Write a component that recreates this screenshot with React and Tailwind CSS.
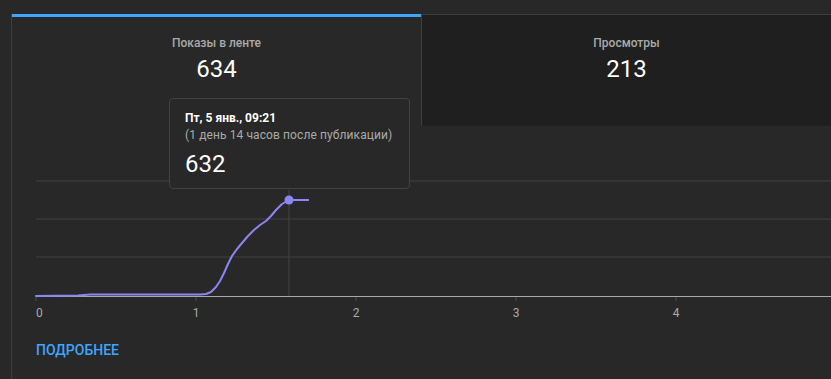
const curve = [
  [24, 170], [66, 169.5], [78, 168.5], [188, 168.5], [194, 168], [199, 166],
  [204, 161], [208, 155], [212, 147], [216, 138], [220, 130], [225, 123],
  [230, 117], [236, 110], [242, 104], [248, 99], [254, 95], [259, 90],
  [264, 84], [270, 78], [277, 74],
];

const ticks = [24, 184, 344, 504, 664];

const Chart = () => {
  const d = curve.map(([x, y], i) => `${i ? "L" : "M"}${x} ${y}`).join(" ");
  return (
    <svg width="819" height="200" className="block">
      {[55, 93, 131].map((y) => (
        <line key={y} x1="24" x2="819" y1={y} y2={y} stroke="#393939" strokeWidth="1.5" />
      ))}
      <line x1="277" x2="277" y1="64" y2="170" stroke="#454545" strokeWidth="1" />
      <line x1="24" x2="819" y1="170.5" y2="170.5" stroke="#a8a8a8" strokeWidth="1" />
      {ticks.map((x) => (
        <line key={x} x1={x} x2={x} y1="171" y2="175" stroke="#4a4a4a" strokeWidth="1" />
      ))}
      <path d={d} fill="none" stroke="#8b86f2" strokeWidth="2" strokeLinejoin="round" strokeLinecap="round" />
      <line x1="281" x2="297" y1="74" y2="74" stroke="#8b86f2" strokeWidth="2" />
      <circle cx="277" cy="74" r="4.5" fill="#8b86f2" />
      {ticks.map((x, i) => (
        <text key={x} x={i ? x : 24} y="191" textAnchor={i ? "middle" : "start"} fontSize="12" fill="#aaaaaa" fontFamily="Roboto, sans-serif">
          {i}
        </text>
      ))}
    </svg>
  );
};

const App = () => {
  return (
    <div className="relative w-[831px] h-[379px] overflow-hidden bg-[#282828] pt-[14px] pl-[11px] font-['Roboto',sans-serif]">
      <div className="border-l border-[#3e3e3e] h-full">
        <div className="flex h-[112px]">
          <div className="w-[409px] shrink-0 border-t-[3px] border-[#3ea6ff] flex flex-col items-center pt-[18px]">
            <div className="text-[12px] leading-4 font-medium text-[#aaaaaa]">Показы в ленте</div>
            <div className="mt-1 text-[24px] leading-7 text-white">634</div>
          </div>
          <div className="flex-1 bg-[#1f1f1f] border-t border-l border-[#3e3e3e] flex flex-col items-center pt-[20px]">
            <div className="text-[12px] leading-4 font-medium text-[#aaaaaa]">Просмотры</div>
            <div className="mt-1 text-[24px] leading-7 text-white">213</div>
          </div>
        </div>
        <Chart />
        <div className="pl-[24px] mt-[14px] text-[14px] leading-5 font-medium text-[#3ea6ff]">ПОДРОБНЕЕ</div>
      </div>

      <div className="absolute left-[169px] top-[98px] w-[241px] rounded-[4px] border border-[#424242] bg-[#282828] px-[15px] pt-[11px] pb-[10px]">
        <div className="text-[12px] leading-4 font-bold text-white">Пт, 5 янв., 09:21</div>
        <div className="mt-px text-[12px] leading-4 tracking-[0.1px] text-[#aaaaaa]">(1 день 14 часов после публикации)</div>
        <div className="mt-[7px] text-[24px] leading-7 text-white">632</div>
      </div>
    </div>
  );
};

export default App;
